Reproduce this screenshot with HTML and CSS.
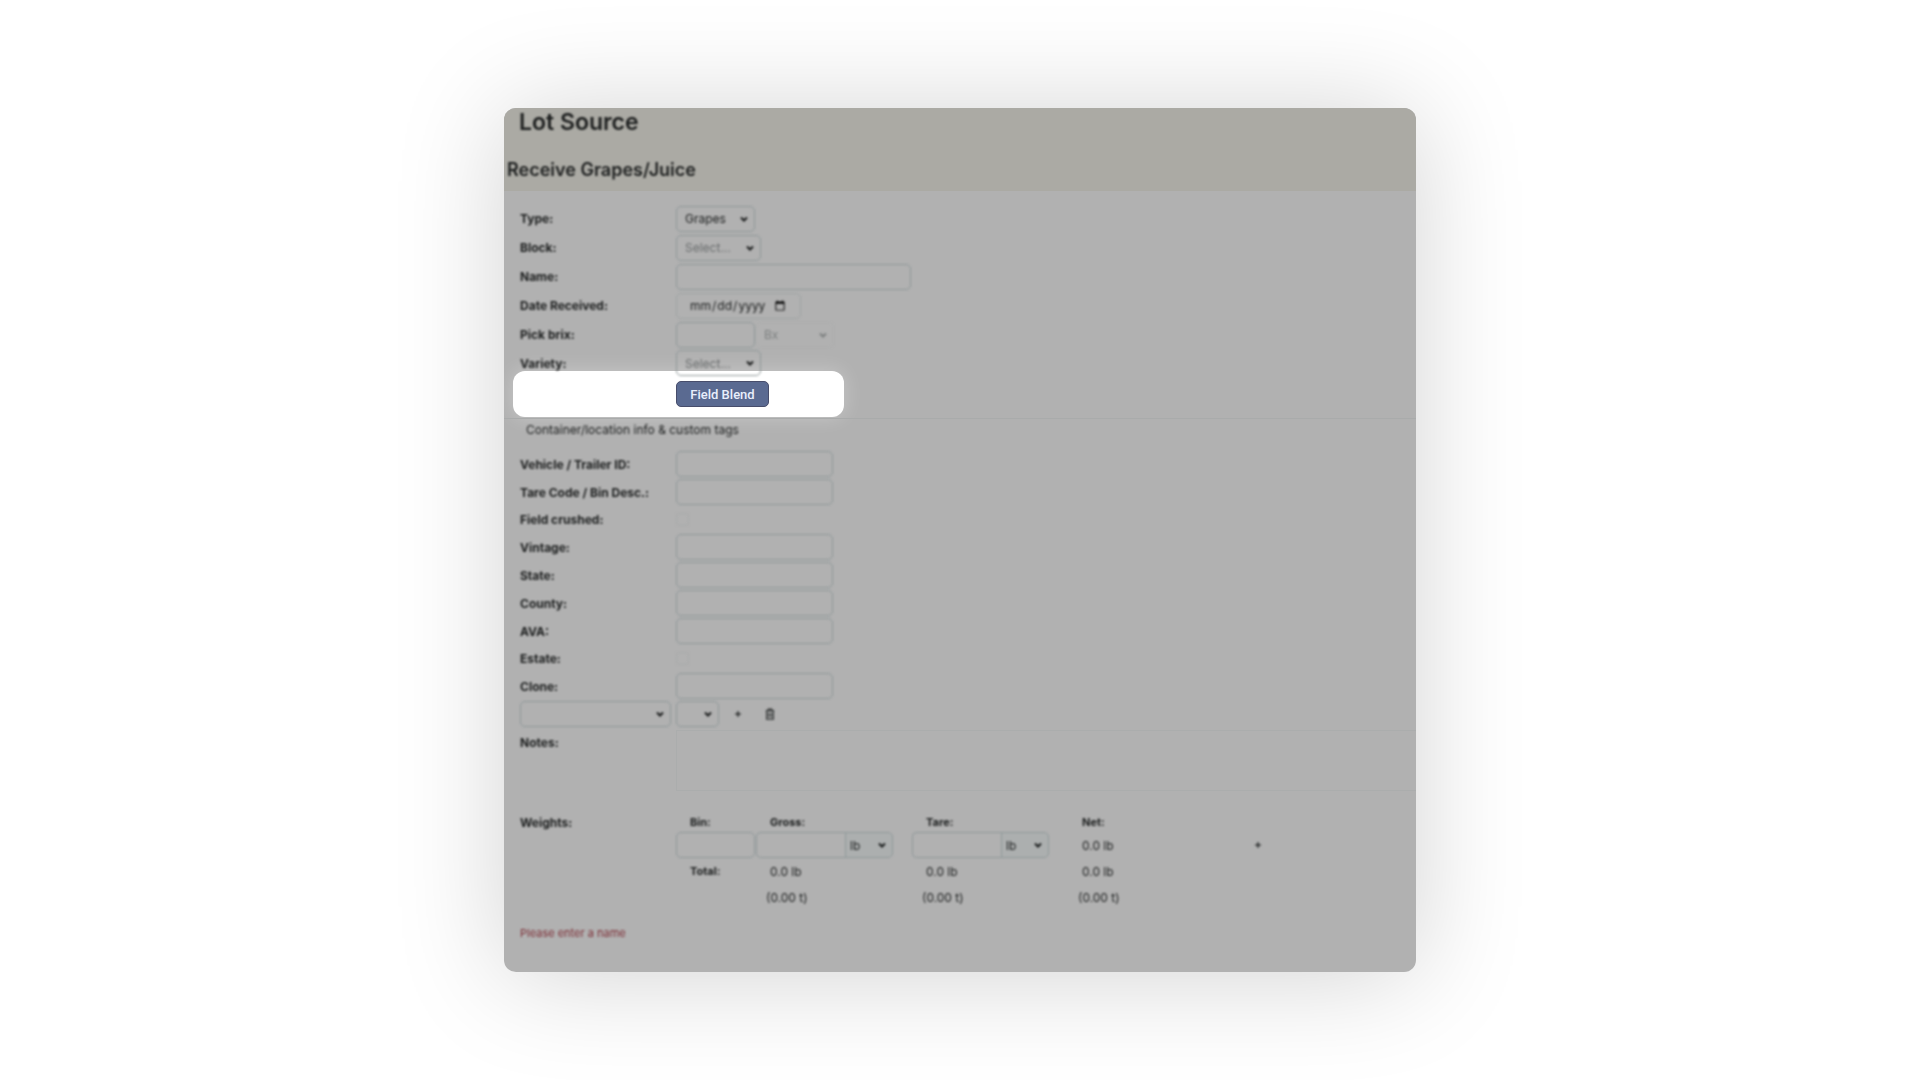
FILE: index.html
```html
<!DOCTYPE html>
<html lang="en">
<head>
    <meta charset="utf-8">
    <title>Lot Source</title>
    <link rel="stylesheet" href="styles.css">
</head>
<body>
    <svg class="symbols" aria-hidden="true">
        <symbol id="chevron" viewBox="0 0 10 10">
            <path d="M2 3.5 L5 6.5 L8 3.5" fill="none" stroke="currentColor" stroke-width="2"/>
        </symbol>
        <symbol id="plus" viewBox="0 0 10 10">
            <path d="M5 1.5 V8.5 M1.5 5 H8.5" fill="none" stroke="currentColor" stroke-width="2"/>
        </symbol>
        <symbol id="trash" viewBox="0 0 12 14">
            <path d="M1 3 H11 M4 3 V1 H8 V3 M2 3 V13 H10 V3 M4.5 5.5 V11 M7.5 5.5 V11" fill="none" stroke="currentColor" stroke-width="1.5"/>
        </symbol>
    </svg>

    <main class="card">
        <header class="card-header">
            <h1 class="blurred">Lot Source</h1>
            <h2 class="blurred">Receive Grapes/Juice</h2>
        </header>

        <form class="lot-form">
            <div class="row tall blurred">
                <label for="type">Type:</label>
                <span class="select small">
                    <select id="type"><option>Grapes</option></select>
                    <svg><use href="#chevron"/></svg>
                </span>
            </div>
            <div class="row tall blurred">
                <label for="block">Block:</label>
                <span class="select medium muted">
                    <select id="block"><option>Select...</option></select>
                    <svg><use href="#chevron"/></svg>
                </span>
            </div>
            <div class="row tall blurred">
                <label for="name">Name:</label>
                <input class="wide" type="text" id="name">
            </div>
            <div class="row tall blurred">
                <label for="date">Date Received:</label>
                <input class="date" type="date" id="date">
            </div>
            <div class="row tall blurred">
                <label for="brix">Pick brix:</label>
                <input class="short" type="text" id="brix">
                <span class="select small disabled">
                    <select aria-label="Brix unit" disabled><option>Bx</option></select>
                    <svg><use href="#chevron"/></svg>
                </span>
            </div>
            <div class="row blurred">
                <label for="variety">Variety:</label>
                <span class="select medium muted">
                    <select id="variety"><option>Select...</option></select>
                    <svg><use href="#chevron"/></svg>
                </span>
            </div>

            <div class="spotlight">
                <button type="button" class="blend-button">Field Blend</button>
            </div>

            <div class="section-title">
                <span class="blurred">Container/location info &amp; custom tags</span>
            </div>

            <div class="row blurred">
                <label for="vehicle">Vehicle / Trailer ID:</label>
                <input type="text" id="vehicle">
            </div>
            <div class="row blurred">
                <label for="tare-code">Tare Code / Bin Desc.:</label>
                <input type="text" id="tare-code">
            </div>
            <div class="row check blurred">
                <label for="crushed">Field crushed:</label>
                <input type="checkbox" id="crushed">
            </div>
            <div class="row blurred">
                <label for="vintage">Vintage:</label>
                <input type="text" id="vintage">
            </div>
            <div class="row blurred">
                <label for="state">State:</label>
                <input type="text" id="state">
            </div>
            <div class="row blurred">
                <label for="county">County:</label>
                <input type="text" id="county">
            </div>
            <div class="row blurred">
                <label for="ava">AVA:</label>
                <input type="text" id="ava">
            </div>
            <div class="row check blurred">
                <label for="estate">Estate:</label>
                <input type="checkbox" id="estate">
            </div>
            <div class="row blurred">
                <label for="clone">Clone:</label>
                <input type="text" id="clone">
            </div>
            <div class="row blurred">
                <span class="select tag">
                    <select aria-label="Custom tag"><option></option></select>
                    <svg><use href="#chevron"/></svg>
                </span>
                <span class="select tag-value">
                    <select aria-label="Tag value"><option></option></select>
                    <svg><use href="#chevron"/></svg>
                </span>
                <button type="button" class="icon-button" aria-label="Add tag">
                    <svg class="plus"><use href="#plus"/></svg>
                </button>
                <button type="button" class="icon-button" aria-label="Delete tag">
                    <svg class="trash"><use href="#trash"/></svg>
                </button>
            </div>
            <div class="row notes">
                <label class="blurred" for="notes">Notes:</label>
                <textarea id="notes"></textarea>
            </div>

            <div class="row weights blurred">
                <span class="label">Weights:</span>
                <table>
                    <thead>
                        <tr>
                            <th class="bin">Bin:</th>
                            <th class="amount">Gross:</th>
                            <th class="amount">Tare:</th>
                            <th class="amount">Net:</th>
                            <th></th>
                        </tr>
                    </thead>
                    <tbody>
                        <tr>
                            <td class="field"><input class="short" type="text" aria-label="Bin"></td>
                            <td class="field">
                                <div class="unit-group">
                                    <input type="text" aria-label="Gross">
                                    <span class="select">
                                        <select aria-label="Gross unit"><option>lb</option></select>
                                        <svg><use href="#chevron"/></svg>
                                    </span>
                                </div>
                            </td>
                            <td class="field">
                                <div class="unit-group">
                                    <input type="text" aria-label="Tare">
                                    <span class="select">
                                        <select aria-label="Tare unit"><option>lb</option></select>
                                        <svg><use href="#chevron"/></svg>
                                    </span>
                                </div>
                            </td>
                            <td>0.0 lb</td>
                            <td class="field">
                                <button type="button" class="icon-button" aria-label="Add bin">
                                    <svg class="plus"><use href="#plus"/></svg>
                                </button>
                            </td>
                        </tr>
                        <tr>
                            <th>Total:</th>
                            <td>0.0 lb</td>
                            <td>0.0 lb</td>
                            <td>0.0 lb</td>
                            <td></td>
                        </tr>
                        <tr>
                            <td></td>
                            <td class="tons">(0.00 t)</td>
                            <td class="tons">(0.00 t)</td>
                            <td class="tons">(0.00 t)</td>
                            <td></td>
                        </tr>
                    </tbody>
                </table>
            </div>

            <p class="error blurred">Please enter a name</p>
        </form>
    </main>
</body>
</html>
```
FILE: styles.css
```css
* {
    box-sizing: border-box;
}

body {
    margin: 0;
    padding: 108px 0;
    background-color: #fff;
    color: #1c1e1e;
    font-family: Inter, "Liberation Sans", sans-serif;
    font-size: 12px;
}

.symbols {
    display: none;
}

.blurred {
    filter: blur(1px);
}

.card {
    width: 47.5%;
    min-width: 780px;
    margin: 0 auto;
    background-color: #b1b1b1;
    border-radius: 12px;
    box-shadow: 0 4px 110px rgba(0, 0, 0, 0.18);
    overflow: hidden;
}

.card-header {
    height: 83px;
    background-color: #abaaa4;
}

.card-header h1 {
    margin: 0;
    padding-left: 15px;
    font-size: 23px;
    font-weight: 600;
    line-height: 28px;
}

.card-header h2 {
    margin: 0;
    padding: 20px 0 0 3px;
    font-size: 18px;
    font-weight: 600;
    line-height: 28px;
}

.lot-form {
    padding: 13px 0 30px;
}

/* Form rows */
.row {
    display: flex;
    align-items: center;
    height: 28px;
    padding-left: 16px;
}

.row.tall {
    height: 29px;
}

.row.check {
    height: 27px;
}

label,
.label {
    flex: none;
    width: 156px;
    font-weight: bold;
}

input,
select,
textarea {
    margin: 0;
    border: 1px solid #8f9899;
    border-radius: 5px;
    background: none;
    color: inherit;
    font-family: inherit;
    font-size: 12px;
}

input[type="text"] {
    display: block;
    width: 157px;
    height: 26px;
}

input[type="text"].wide {
    width: 235px;
}

input[type="text"].short {
    width: 79px;
}

input.date {
    width: 125px;
    height: 26px;
    padding: 0 12px;
    border-color: #9fa4a4;
}

input[type="checkbox"] {
    appearance: none;
    width: 13px;
    height: 13px;
    border-color: #a9abab;
    border-radius: 3px;
}

/* Selects with their own arrow */
.select {
    position: relative;
    display: flex;
}

.select select {
    appearance: none;
    width: 100%;
    height: 26px;
    padding: 0 8px;
}

.select svg {
    position: absolute;
    top: 8px;
    right: 6px;
    width: 10px;
    height: 10px;
    pointer-events: none;
}

.select.small {
    width: 79px;
}

.select.medium {
    width: 85px;
}

.select.muted select {
    color: #6b6e6f;
}

.select.disabled {
    color: #7d8080;
}

.select.disabled select {
    border-color: #adaeae;
    opacity: 1;
}

.select.tag {
    width: 151px;
    margin-right: 5px;
}

.select.tag-value {
    width: 43px;
    margin-right: 7px;
}

.icon-button {
    display: flex;
    align-items: center;
    justify-content: center;
    width: 24px;
    height: 26px;
    margin-right: 8px;
    padding: 0;
    border: none;
    background: none;
    color: #303333;
    cursor: pointer;
}

.plus {
    width: 8px;
    height: 8px;
}

.trash {
    width: 10px;
    height: 12px;
}

/* Highlighted step */
.spotlight {
    display: flex;
    align-items: center;
    width: 331px;
    height: 46px;
    margin: -6px 0 0 9px;
    padding-left: 163px;
    background-color: #fff;
    border-radius: 12px;
    box-shadow: 0 0 20px rgba(255, 255, 255, 0.3);
}

.blend-button {
    width: 93px;
    height: 26px;
    padding: 0;
    border: 1px solid #474d6b;
    border-radius: 5px;
    background-color: #5a6a91;
    color: #e9effc;
    font-family: Roboto, sans-serif;
    font-size: 13px;
    font-weight: 500;
    cursor: pointer;
}

.section-title {
    height: 32px;
    margin-top: 1px;
    padding-left: 22px;
    border-top: 1px solid #a9abab;
    line-height: 22px;
}

.section-title span {
    display: inline-block;
}

.row.notes {
    align-items: flex-start;
    height: auto;
    margin-top: 2px;
}

.notes label {
    line-height: 26px;
}

.notes textarea {
    flex: 1;
    height: 61px;
    border-color: #abadad;
    border-right: none;
    border-radius: 0;
    resize: none;
}

/* Weights table */
.row.weights {
    align-items: flex-start;
    height: auto;
    margin-top: 21px;
}

.weights .label {
    line-height: 22px;
}

.weights table {
    flex: 1;
    border-collapse: collapse;
    table-layout: fixed;
}

.weights th,
.weights td {
    height: 26px;
    padding: 0 0 0 14px;
    text-align: left;
}

.weights th {
    font-size: 11px;
}

.weights thead th {
    height: 20px;
}

.weights th.bin {
    width: 80px;
}

.weights th.amount {
    width: 156px;
}

.weights td.field {
    padding: 0;
}

.weights td.tons {
    padding-left: 10px;
}

.weights td .icon-button {
    margin-left: 22px;
}

.unit-group {
    display: flex;
    width: 137px;
}

.unit-group input[type="text"] {
    width: 89px;
    border-right: none;
    border-radius: 5px 0 0 5px;
}

.unit-group .select {
    width: 48px;
}

.unit-group select {
    padding: 0 4px;
    border-radius: 0 5px 5px 0;
    background-color: #acafaf;
}

.error {
    margin: 14px 0 0;
    padding-left: 16px;
    color: #7d2f37;
    font-size: 11px;
    line-height: 18px;
}
```
